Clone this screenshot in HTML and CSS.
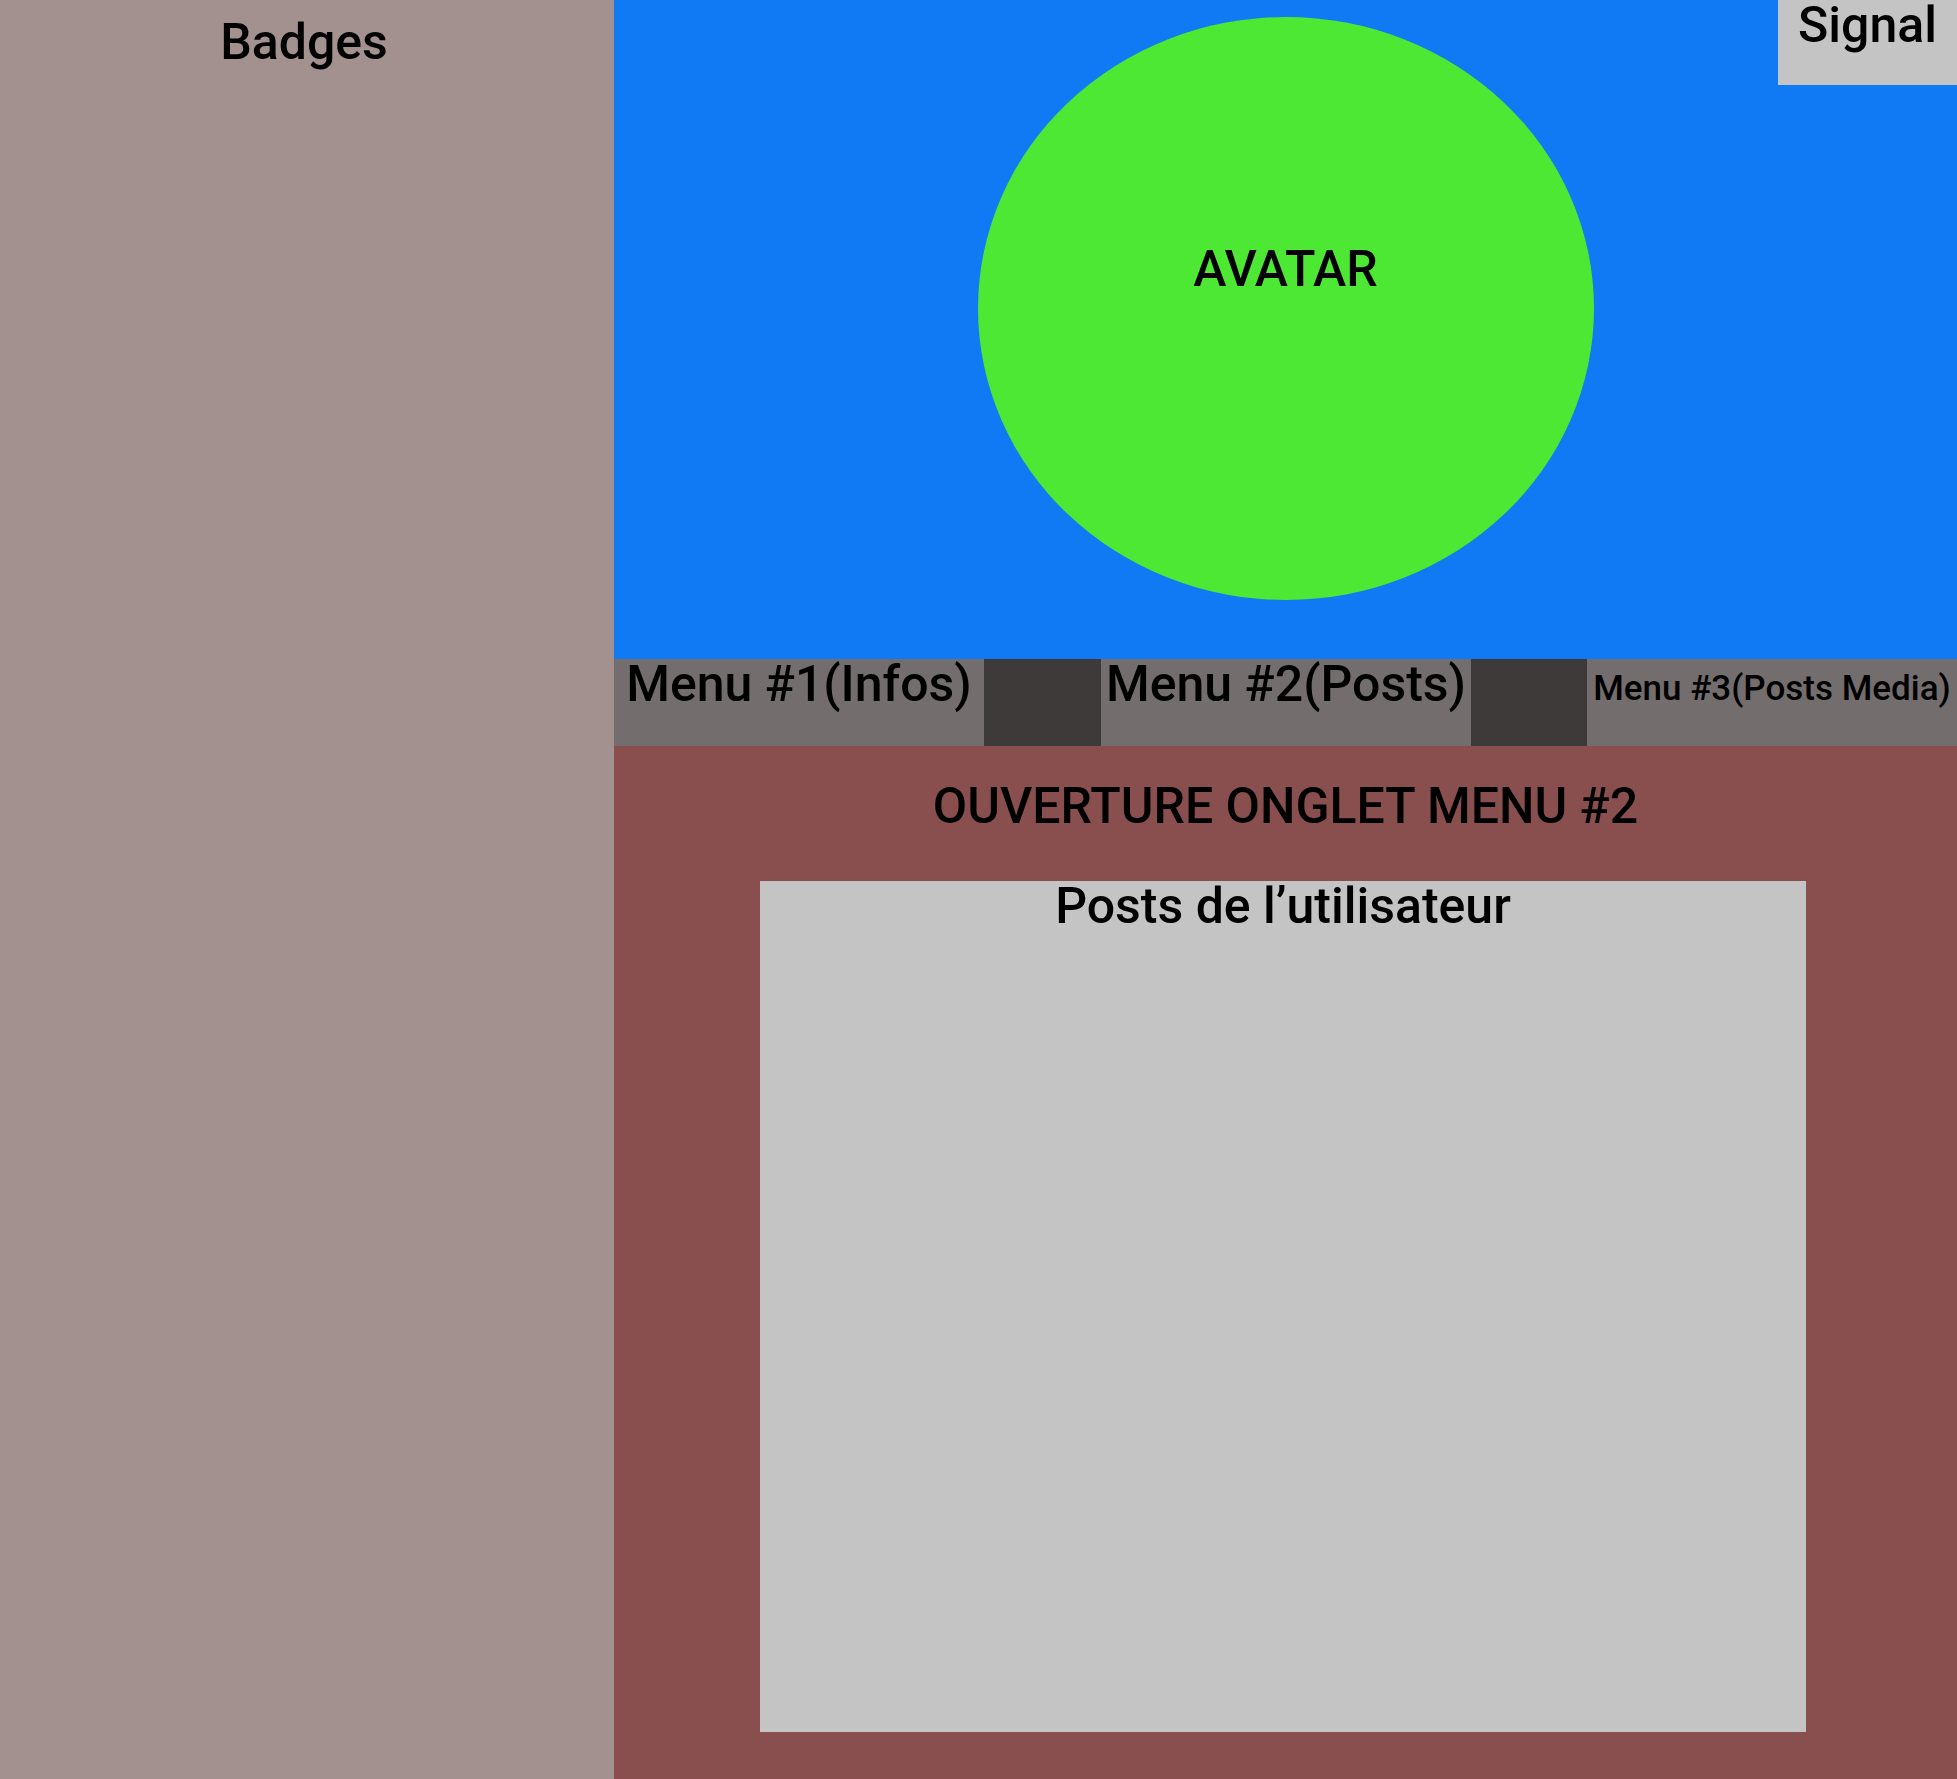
FILE: index.html
```html
<!DOCTYPE html>
<html lang="fr">
<head>
<meta charset="utf-8">
<title>Profil</title>
<link rel="stylesheet" href="styles.css">
</head>
<body>
<div class="page">
  <aside class="badges">
    <h2 class="badges-title">Badges</h2>
  </aside>
  <main class="main">
    <header class="hero">
      <div class="avatar"><span class="avatar-label">AVATAR</span></div>
      <div class="signal">Signal</div>
    </header>
    <nav class="menu">
      <div class="menu-item">Menu #1(Infos)</div>
      <div class="menu-sep"></div>
      <div class="menu-item">Menu #2(Posts)</div>
      <div class="menu-sep"></div>
      <div class="menu-item menu-item-small">Menu #3(Posts Media)</div>
    </nav>
    <section class="content">
      <h1 class="content-title">OUVERTURE ONGLET MENU #2</h1>
      <div class="posts">
        <h3 class="posts-title">Posts de l’utilisateur</h3>
      </div>
    </section>
  </main>
</div>
</body>
</html>
```

FILE: styles.css
```css
* {
  box-sizing: border-box;
}

html, body {
  margin: 0;
  padding: 0;
}

body {
  font-family: Roboto, "Liberation Sans", sans-serif;
  font-weight: 500;
  color: #000;
  line-height: 1;
}

h1, h2, h3 {
  margin: 0;
  font-weight: 500;
}

.page {
  display: grid;
  grid-template-columns: 614px 1fr;
  width: 1957px;
  height: 1779px;
}

.badges {
  background: #a39190;
  padding-top: 17px;
  padding-right: 6px;
}

.badges-title {
  font-size: 50px;
  text-align: center;
}

.main {
  display: flex;
  flex-direction: column;
  min-width: 0;
}

.hero {
  position: relative;
  height: 659px;
  background: #107af4;
  padding-top: 17px;
  display: flex;
  justify-content: center;
}

.avatar {
  width: 616px;
  height: 583px;
  border-radius: 50%;
  background: #4de834;
  text-align: center;
  padding-top: 227px;
}

.avatar-label {
  font-size: 50px;
}

.signal {
  position: absolute;
  top: 0;
  right: 0;
  width: 179px;
  height: 85px;
  background: #c4c4c4;
  font-size: 50px;
  text-align: center;
}

.menu {
  display: grid;
  grid-template-columns: 370px 117px 370px 116px 370px;
  height: 87px;
  background: #736e6d;
}

.menu-item {
  font-size: 50px;
  text-align: center;
  white-space: nowrap;
}

.menu-item-small {
  font-size: 35px;
  padding-top: 12px;
}

.menu-sep {
  background: #3f3a3a;
}

.content {
  flex: 1;
  background: #884f4e;
  padding-top: 35px;
}

.content-title {
  font-size: 50px;
  text-align: center;
  margin-bottom: 50px;
}

.posts {
  width: 1046px;
  height: 851px;
  margin-left: 146px;
  background: #c4c4c4;
}

.posts-title {
  font-size: 50px;
  text-align: center;
}
```
